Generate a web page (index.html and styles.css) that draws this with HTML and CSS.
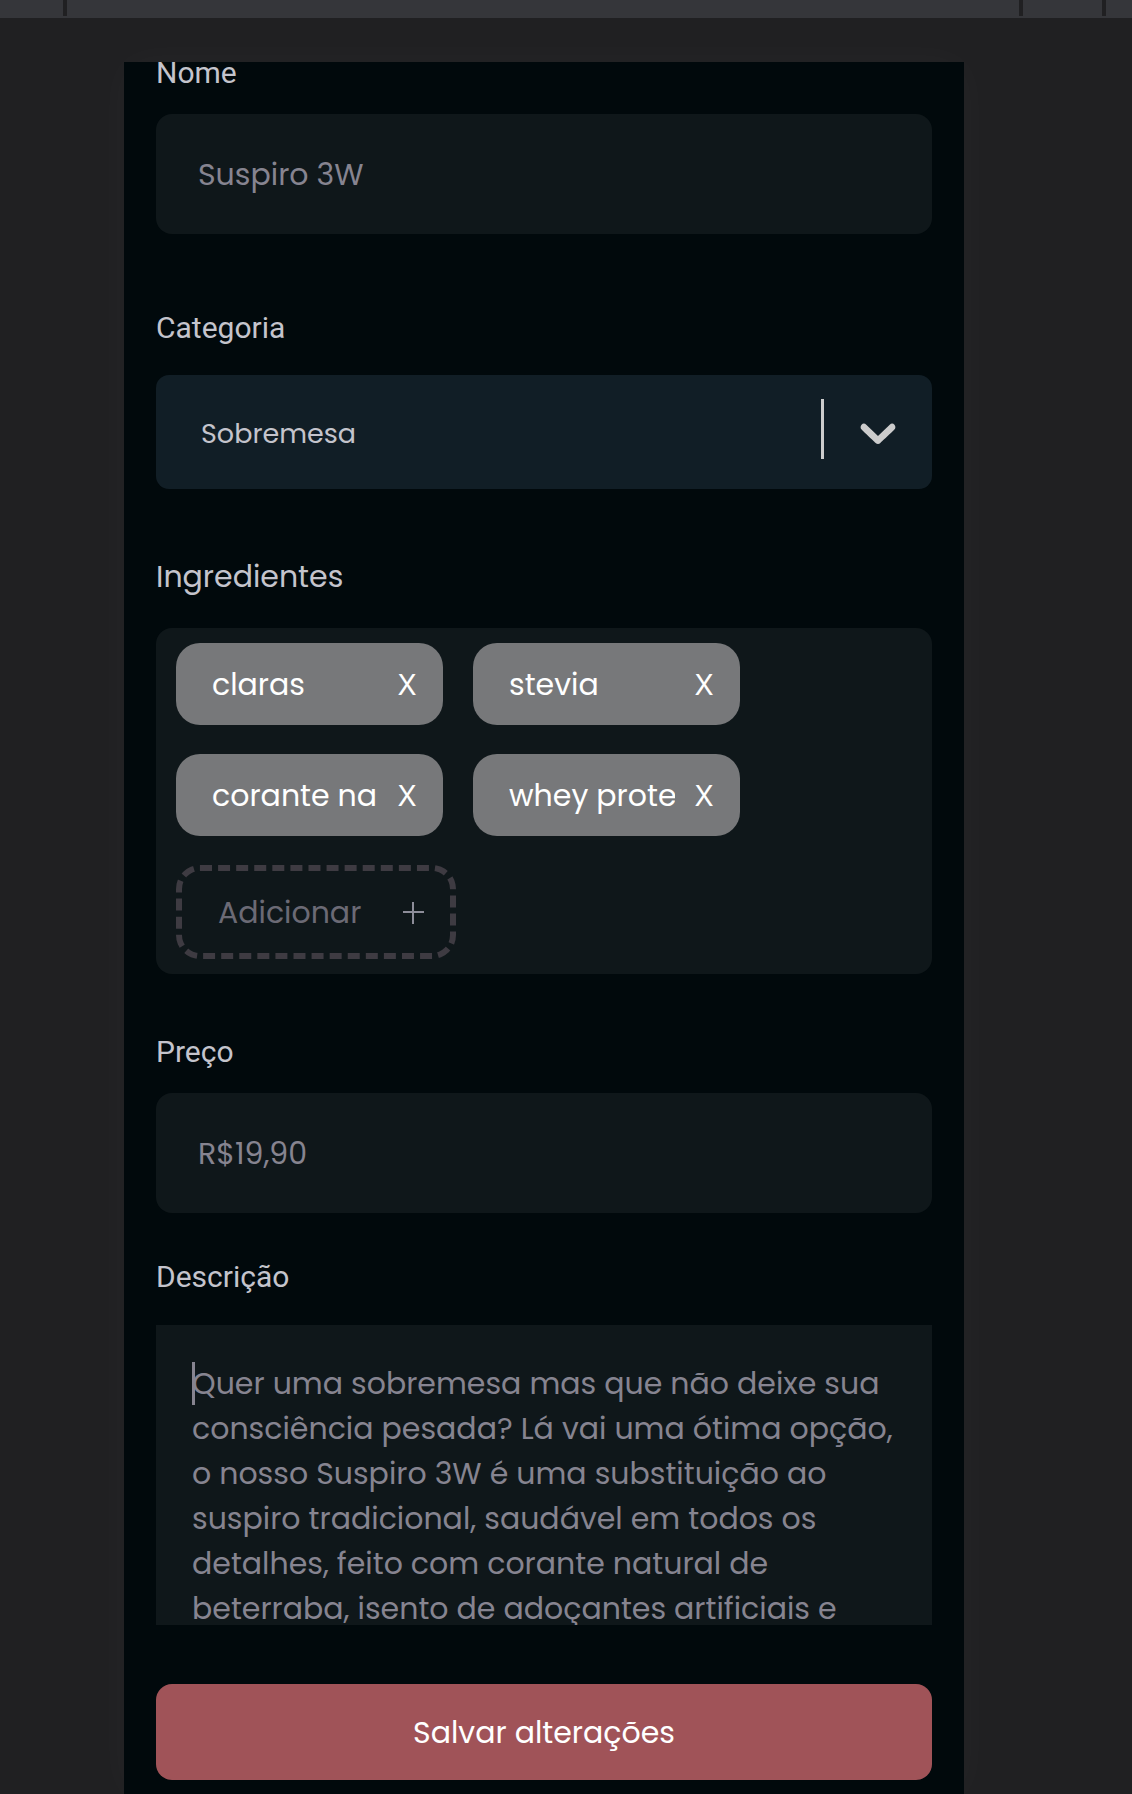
FILE: index.html
```html
<!DOCTYPE html>
<html lang="pt-BR">
<head>
<meta charset="utf-8">
<meta name="viewport" content="width=device-width, initial-scale=1">
<title>Editar prato</title>
<link rel="stylesheet" href="styles.css">
</head>
<body>
<div class="ruler" aria-hidden="true">
  <span class="ruler-edge"></span>
  <span class="ruler-main"></span>
  <span class="ruler-step"></span>
  <span class="ruler-end"></span>
</div>
<main class="stage">
  <form class="form">
    <div class="field">
      <label class="label" for="name">Nome</label>
      <input class="input" id="name" type="text" placeholder="Suspiro 3W">
    </div>

    <div class="field field-category">
      <label class="label" for="category">Categoria</label>
      <div class="select-box">
        <select class="select" id="category">
          <option>Sobremesa</option>
        </select>
        <span class="select-mark">
          <svg class="chevron" viewBox="0 0 20 20" aria-hidden="true"><path d="M4.516 7.548c0.436-0.446 1.043-0.481 1.576 0l3.908 3.747 3.908-3.747c0.533-0.481 1.141-0.446 1.574 0 0.436 0.445 0.408 1.197 0 1.615-0.406 0.418-4.695 4.502-4.695 4.502-0.217 0.223-0.502 0.335-0.787 0.335s-0.57-0.112-0.789-0.335c0 0-4.287-4.084-4.695-4.502s-0.436-1.17 0-1.615z"/></svg>
        </span>
      </div>
    </div>

    <div class="field field-ingredients">
      <label class="label label-wide" for="new-ingredient">Ingredientes</label>
      <div class="tags">
        <div class="tag"><input class="tag-input" type="text" value="claras" aria-label="Ingrediente 1" readonly><button class="tag-button" type="button">X</button></div>
        <div class="tag"><input class="tag-input" type="text" value="stevia" aria-label="Ingrediente 2" readonly><button class="tag-button" type="button">X</button></div>
        <div class="tag"><input class="tag-input" type="text" value="corante na" aria-label="Ingrediente 3" readonly><button class="tag-button" type="button">X</button></div>
        <div class="tag"><input class="tag-input" type="text" value="whey prote" aria-label="Ingrediente 4" readonly><button class="tag-button" type="button">X</button></div>
        <div class="tag tag-new"><input class="tag-input" id="new-ingredient" type="text" placeholder="Adicionar"><button class="tag-button" type="button" aria-label="Adicionar ingrediente"><svg class="plus" viewBox="0 0 22 22" aria-hidden="true"><path d="M10 0v22M0 10h21"/></svg></button></div>
      </div>
    </div>

    <div class="field field-price">
      <label class="label" for="price">Preço</label>
      <input class="input" id="price" type="text" placeholder="R$19,90">
    </div>

    <div class="field field-description">
      <label class="label" for="description">Descrição</label>
      <div class="area-box">
        <textarea class="area" id="description" placeholder="Quer uma sobremesa mas que não deixe sua consciência pesada? Lá vai uma ótima opção, o nosso Suspiro 3W é uma substituição ao suspiro tradicional, saudável em todos os detalhes, feito com corante natural de beterraba, isento de adoçantes artificiais e"></textarea>
        <span class="caret" aria-hidden="true"></span>
      </div>
    </div>

    <button class="submit" type="submit">Salvar alterações</button>
  </form>
</main>
</body>
</html>
```

FILE: styles.css
```css
*,
*::before,
*::after {
  box-sizing: border-box;
}

body {
  margin: 0;
  min-height: 100vh;
  display: flex;
  flex-direction: column;
  background: #202022;
  color: #c4c4cc;
  font-family: Poppins, Inter, sans-serif;
  font-size: 30px;
}

input,
select,
textarea,
button {
  font: inherit;
  margin: 0;
  padding: 0;
  border: 0;
  border-radius: 0;
  outline: 0;
  appearance: none;
}

.ruler {
  display: flex;
  gap: 4px;
  height: 18px;
  background: #202022;
  border-bottom: 2px solid #35363a;
}

.ruler span {
  background: #35363a;
}

.ruler-edge {
  width: 63px;
}

.ruler-main {
  flex: 1;
}

.ruler-step {
  width: 79px;
}

.ruler-end {
  width: 26px;
}

.stage {
  flex: 1;
  display: flex;
  padding: 44px 168px 0 124px;
}

.form {
  flex: 1;
  min-width: 0;
  padding: 0 32px 14px;
  background: #01090c;
  box-shadow: 0 0 40px rgba(255, 255, 255, 0.03);
}

.field {
  display: flex;
  flex-direction: column;
  gap: 30px;
}

.field-category {
  margin-top: 83px;
  gap: 36px;
}

.field-ingredients {
  margin-top: 77px;
  gap: 40px;
}

.field-price {
  margin-top: 67px;
}

.field-description {
  margin-top: 53px;
  gap: 37px;
}

.label {
  font-family: Roboto, sans-serif;
  line-height: 22px;
}

.label-wide {
  font-family: Poppins, Inter, sans-serif;
}

.input {
  width: 100%;
  height: 120px;
  padding: 2px 42px 0;
  border-radius: 16px;
  background: #0f171a;
  color: #c4c4cc;
}

.input::placeholder,
.area::placeholder {
  color: #868490;
  opacity: 1;
}

.select-box {
  position: relative;
}

.select {
  display: block;
  width: 100%;
  height: 114px;
  padding: 2px 120px 0 45px;
  border-radius: 13px;
  background: #111e26;
  color: #c4c4cc;
  font-size: 27px;
}

.select-mark {
  position: absolute;
  top: 24px;
  right: 24px;
  height: 60px;
  padding-left: 24px;
  border-left: 3px solid #cccccc;
  pointer-events: none;
}

.chevron {
  display: block;
  width: 60px;
  height: 66px;
  fill: #cccccc;
}

.tags {
  display: flex;
  flex-wrap: wrap;
  gap: 29px 30px;
  padding: 15px 20px;
  padding-right: 140px;
  border-radius: 16px;
  background: #0f171a;
}

.tag {
  display: flex;
  align-items: center;
  justify-content: space-between;
  width: 267px;
  height: 82px;
  padding: 2px 21px 0 36px;
  border-radius: 24px;
  background: #77787a;
  color: #ffffff;
}

.tag-input {
  width: 166px;
  height: 46px;
  background: transparent;
  color: inherit;
}

.tag-button {
  width: 30px;
  height: 46px;
  background: transparent;
  color: #ffffff;
  font-family: Inter, sans-serif;
  font-size: 28px;
  font-weight: 400;
  text-align: center;
}

.tag-new {
  width: 280px;
  height: 94px;
  border: 6px dashed #3e3b42;
  background: transparent;
}

.tag-new .tag-input::placeholder {
  color: #6b6a75;
  opacity: 1;
}

.plus {
  display: block;
  width: 22px;
  height: 22px;
  margin: 0 auto;
  fill: none;
  stroke: #8d8d99;
  stroke-width: 2;
}

.area-box {
  position: relative;
}

.area {
  display: block;
  width: 100%;
  height: 300px;
  padding: 36px 36px 0;
  background: #0f171a;
  color: #c4c4cc;
  line-height: 45px;
  resize: none;
  overflow: hidden;
}

.caret {
  position: absolute;
  top: 37px;
  left: 36px;
  width: 3px;
  height: 43px;
  background: #868490;
}

.submit {
  display: block;
  width: 100%;
  height: 96px;
  margin-top: 59px;
  padding-top: 2px;
  border-radius: 16px;
  background: #a05358;
  color: #ffffff;
}
```
